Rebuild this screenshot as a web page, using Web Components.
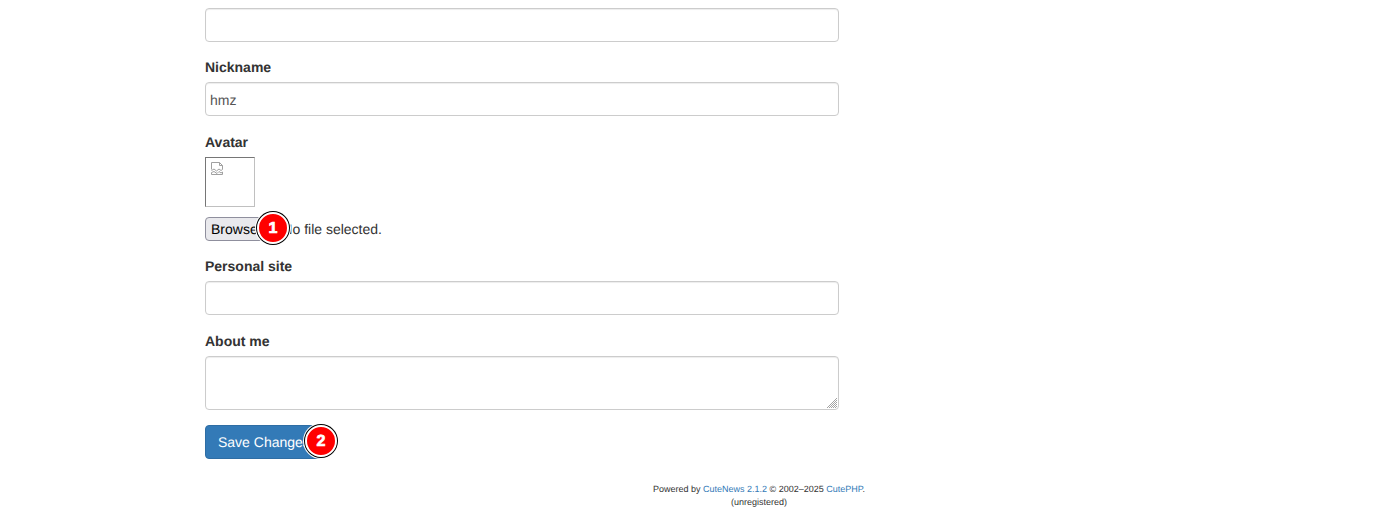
<!DOCTYPE html>
<html>
<head>
<meta charset="utf-8">
<title>Profile</title>
<style>
  html, body { margin: 0; background: #fff; }
  body {
    font-family: "Liberation Sans", Arial, sans-serif;
    font-size: 14px;
    line-height: 20px;
    color: #333;
    overflow: hidden;
    height: 517px;
    text-rendering: geometricPrecision;
  }
</style>
</head>
<body>
<template id="field-tpl">
  <style>
    :host { display: block; margin-bottom: 15px; position: relative; }
    :host([gap]) { margin-bottom: 16px; }
    label { display: block; font-weight: bold; margin-bottom: 5px; }
    label:empty { display: none; }
    .ctl {
      display: block;
      box-sizing: border-box;
      width: 100%;
      height: 34px;
      padding: 7px 4px 5px;
      font: inherit;
      text-rendering: inherit;
      color: #555;
      background: #fff;
      border: 1px solid #ccc;
      border-radius: 4px;
      box-shadow: inset 0 1px 1px rgba(0,0,0,.075);
      outline: none;
    }
    textarea.ctl { height: 54px; resize: none; }
    svg { position: absolute; right: 1px; bottom: 1px; }
  </style>
  <label></label>
  <slot></slot>
</template>

<profile-page>
  <profile-field></profile-field>
  <profile-field label="Nickname" value="hmz" gap></profile-field>
  <profile-field label="Avatar" custom>
    <broken-avatar></broken-avatar>
    <file-row><note-badge>1</note-badge></file-row>
  </profile-field>
  <profile-field label="Personal site" gap></profile-field>
  <profile-field label="About me" type="textarea"></profile-field>
  <save-button><note-badge>2</note-badge></save-button>
  <site-footer slot="footer"></site-footer>
</profile-page>

<script>
class ProfileField extends HTMLElement {
  constructor() {
    super();
    this.attachShadow({ mode: "open" });
    this.shadowRoot.appendChild(document.getElementById("field-tpl").content.cloneNode(true));
    this.shadowRoot.querySelector("label").textContent = this.getAttribute("label") || "";
    if (this.hasAttribute("custom")) return;
    const multi = this.getAttribute("type") === "textarea";
    const ctl = document.createElement(multi ? "textarea" : "input");
    ctl.className = "ctl";
    if (!multi) {
      ctl.type = "text";
      ctl.value = this.getAttribute("value") || "";
    }
    this.shadowRoot.appendChild(ctl);
    if (multi) {
      // resize grip, hatched like the reference
      const grip = document.createElementNS("http://www.w3.org/2000/svg", "svg");
      grip.setAttribute("width", "12");
      grip.setAttribute("height", "12");
      grip.setAttribute("viewBox", "0 0 12 12");
      grip.innerHTML = `<path d="M11 1L1 11M11 3L3 11M11 5L5 11M11 7L7 11M11 9L9 11" stroke="#999" stroke-width=".9" fill="none"/>`;
      this.shadowRoot.appendChild(grip);
    }
  }
}

class BrokenAvatar extends HTMLElement {
  constructor() {
    super();
    this.attachShadow({ mode: "open" });
    this.shadowRoot.innerHTML = `
      <style>
        :host {
          display: block;
          box-sizing: border-box;
          width: 50px;
          height: 50px;
          border: 1px solid;
          border-color: #767676 #c0c0c0 #c0c0c0 #767676;
          padding: 3px 0 0 4px;
        }
        svg { display: block; }
      </style>
      <svg width="16" height="16" viewBox="0 0 16 16" fill="none" stroke="#a0a0a0" stroke-width="1">
        <path d="M1.500 8.500V1.500h8l3 3v4"/>
        <path d="M9.500 1.500v3h3"/>
        <path d="M1.500 9.500l2.500-1.500 2.500 2 2.500-2 2 1.500 1.500-1"/>
        <path d="M1.500 11.500l2.500-1 3 2 2-2 2 1.500 1.500-1v2.500h-11z"/>
      </svg>`;
  }
}

class NoteBadge extends HTMLElement {
  constructor() {
    super();
    this.attachShadow({ mode: "open" });
    this.shadowRoot.innerHTML = `
      <style>
        :host {
          position: absolute;
          box-sizing: border-box;
          width: 32px;
          height: 32px;
          border-radius: 50%;
          background: #f00;
          border: 2px solid #fff;
          box-shadow: 0 0 0 1px #000, 0 0 0 2px #fff;
          color: #fff;
          font: bold 16px/30px "Liberation Sans", sans-serif;
          -webkit-text-stroke: .7px #fff;
          text-align: center;
          z-index: 5;
        }
      </style>
      <slot></slot>`;
  }
}

class FileRow extends HTMLElement {
  constructor() {
    super();
    this.attachShadow({ mode: "open" });
    this.shadowRoot.innerHTML = `
      <style>
        :host { display: flex; align-items: center; height: 24px; position: relative; margin-top: 10px; }
        button {
          box-sizing: border-box;
          height: 24px;
          padding: 0 5px;
          font: 14px "Liberation Sans", Arial, sans-serif;
          text-rendering: inherit;
          color: #000;
          background: #e9e9ed;
          border: 1px solid #8f8f9d;
          border-radius: 4px;
          margin-right: 7px;
        }
        span { color: #333; }
        ::slotted(note-badge) { left: 52px; top: -5px; }
      </style>
      <button type="button">Browse...</button><span>No file selected.</span>
      <slot></slot>`;
  }
}

class SaveButton extends HTMLElement {
  constructor() {
    super();
    this.attachShadow({ mode: "open" });
    this.shadowRoot.innerHTML = `
      <style>
        :host { display: inline-block; position: relative; vertical-align: top; }
        button {
          display: block;
          height: 34px;
          padding: 6px 12px;
          font: 14px/20px "Liberation Sans", Arial, sans-serif;
          text-rendering: inherit;
          color: #fff;
          background: #337ab7;
          border: 1px solid #2e6da4;
          border-radius: 4px;
        }
        ::slotted(note-badge) { left: 100px; top: 0; }
      </style>
      <button type="button">Save Changes</button>
      <slot></slot>`;
  }
}

class SiteFooter extends HTMLElement {
  constructor() {
    super();
    this.attachShadow({ mode: "open" });
    this.shadowRoot.innerHTML = `
      <style>
        :host {
          display: block;
          width: 1108px;
          margin-top: 24px;
          text-align: center;
          font-size: 9px;
          line-height: 13px;
          color: #333;
        }
        a { color: #337ab7; text-decoration: none; }
      </style>
      <div>Powered by <a href="#">CuteNews 2.1.2</a> © 2002–2025 <a href="#">CutePHP</a>.<br>(unregistered)</div>`;
  }
}

class ProfilePage extends HTMLElement {
  constructor() {
    super();
    this.attachShadow({ mode: "open" });
    this.shadowRoot.innerHTML = `
      <style>
        :host { display: block; padding: 8px 0 0 205px; }
        .form { width: 634px; }
      </style>
      <div class="form"><slot></slot></div>
      <slot name="footer"></slot>`;
  }
}

customElements.define("profile-field", ProfileField);
customElements.define("broken-avatar", BrokenAvatar);
customElements.define("note-badge", NoteBadge);
customElements.define("file-row", FileRow);
customElements.define("save-button", SaveButton);
customElements.define("site-footer", SiteFooter);
customElements.define("profile-page", ProfilePage);
</script>
</body>
</html>
